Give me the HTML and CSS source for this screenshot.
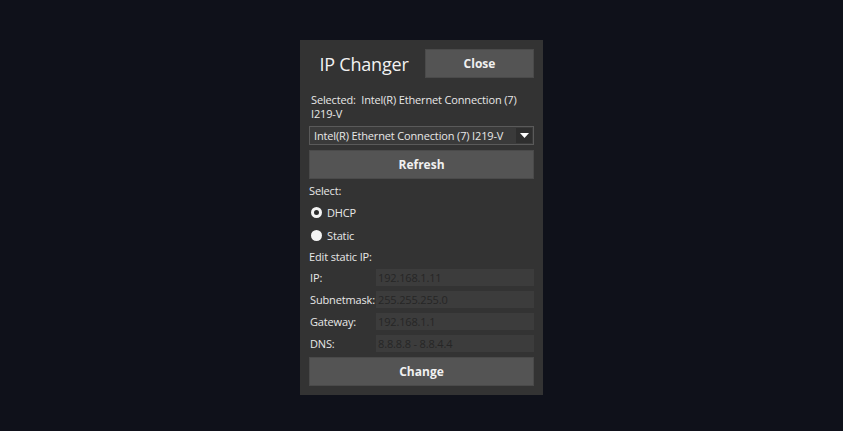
FILE: index.html
```html
<!DOCTYPE html>
<html>
<head>
<meta charset="utf-8">
<link rel="stylesheet" href="styles.css">
</head>
<body>
<div class="panel">
  <div class="header">
    <div class="title">IP Changer</div>
    <button class="btn">Close</button>
  </div>
  <div class="selected">Selected:&nbsp; Intel(R) Ethernet Connection (7)<br>I219-V</div>
  <div class="dropdown">
    <span class="dd-text">Intel(R) Ethernet Connection (7) I219-V</span>
    <span class="dd-arrow"><svg width="9" height="5" viewBox="0 0 9 5"><path d="M0 0H9L4.5 5Z" fill="#fff"/></svg></span>
  </div>
  <button class="btn wide refresh">Refresh</button>
  <div class="label select">Select:</div>
  <div class="radio-row dhcp"><span class="radio ring"></span>DHCP</div>
  <div class="radio-row static"><span class="radio filled"></span>Static</div>
  <div class="label edit">Edit static IP:</div>
  <div class="fields">
    <div class="field"><span class="fl">IP:</span><span class="inp">192.168.1.11</span></div>
    <div class="field"><span class="fl">Subnetmask:</span><span class="inp">255.255.255.0</span></div>
    <div class="field"><span class="fl">Gateway:</span><span class="inp">192.168.1.1</span></div>
    <div class="field"><span class="fl">DNS:</span><span class="inp">8.8.8.8 - 8.8.4.4</span></div>
  </div>
  <button class="btn wide change">Change</button>
</div>
</body>
</html>
```

FILE: styles.css
```css
html, body {
  margin: 0;
  padding: 0;
  background: #0f111a;
  height: 100%;
}
body {
  font-family: "Open Sans", "Noto Sans", sans-serif;
  font-size: 11px;
  letter-spacing: -0.15px;
  color: #e8e8e8;
}
.panel {
  width: 225px;
  margin: 40px 0 0 300px;
  padding: 9px;
  background: #333333;
  display: flex;
  flex-direction: column;
}
.header {
  display: grid;
  grid-template-columns: 1fr 109px;
  gap: 7px;
  align-items: center;
}
.title {
  text-align: center;
  font-size: 18px;
  letter-spacing: -0.2px;
  color: #f2f2f2;
  padding-left: 1px;
}
.btn {
  font-family: inherit;
  font-weight: bold;
  font-size: 12px;
  letter-spacing: 0;
  color: #f0f0f0;
  background: #545454;
  border: none;
  height: 29px;
  padding: 0;
  box-shadow: inset 0 0 0 1px #4a4a4a;
}
.selected {
  margin-top: 15px;
  padding-left: 2px;
  line-height: 14px;
}
.dropdown {
  margin-top: 5px;
  height: 19px;
  box-sizing: border-box;
  border: 1px solid #5a5a5a;
  background: #3a3a3a;
  display: flex;
  align-items: center;
  padding-left: 4px;
}
.dd-text {
  flex: 1;
  white-space: nowrap;
  overflow: hidden;
}
.dd-arrow {
  width: 16px;
  height: 15px;
  margin-right: 1px;
  background: #2e2e2e;
  display: flex;
  align-items: center;
  justify-content: center;
}
.wide {
  width: 100%;
}
.refresh {
  margin-top: 5px;
}
.label {
  line-height: 14px;
}
.select {
  margin-top: 5px;
}
.radio-row {
  height: 20px;
  display: flex;
  align-items: center;
  padding-left: 2px;
}
.dhcp {
  margin-top: 4px;
}
.static {
  margin-top: 3px;
}
.radio {
  width: 11px;
  height: 11px;
  box-sizing: border-box;
  border-radius: 50%;
  margin-right: 5px;
}
.ring {
  border: 3px solid #f4f4f4;
  background: #2c2c2c;
}
.filled {
  background: #f4f4f4;
}
.edit {
  margin-top: 5px;
}
.fields {
  margin-top: 5px;
  display: flex;
  flex-direction: column;
  gap: 5px;
}
.field {
  display: grid;
  grid-template-columns: 67px 1fr;
  align-items: center;
  height: 17px;
}
.fl {
  padding-left: 1px;
}
.inp {
  height: 17px;
  background: #3c3c3c;
  color: #262626;
  line-height: 17px;
  padding-left: 2px;
}
.change {
  margin-top: 5px;
}
```
